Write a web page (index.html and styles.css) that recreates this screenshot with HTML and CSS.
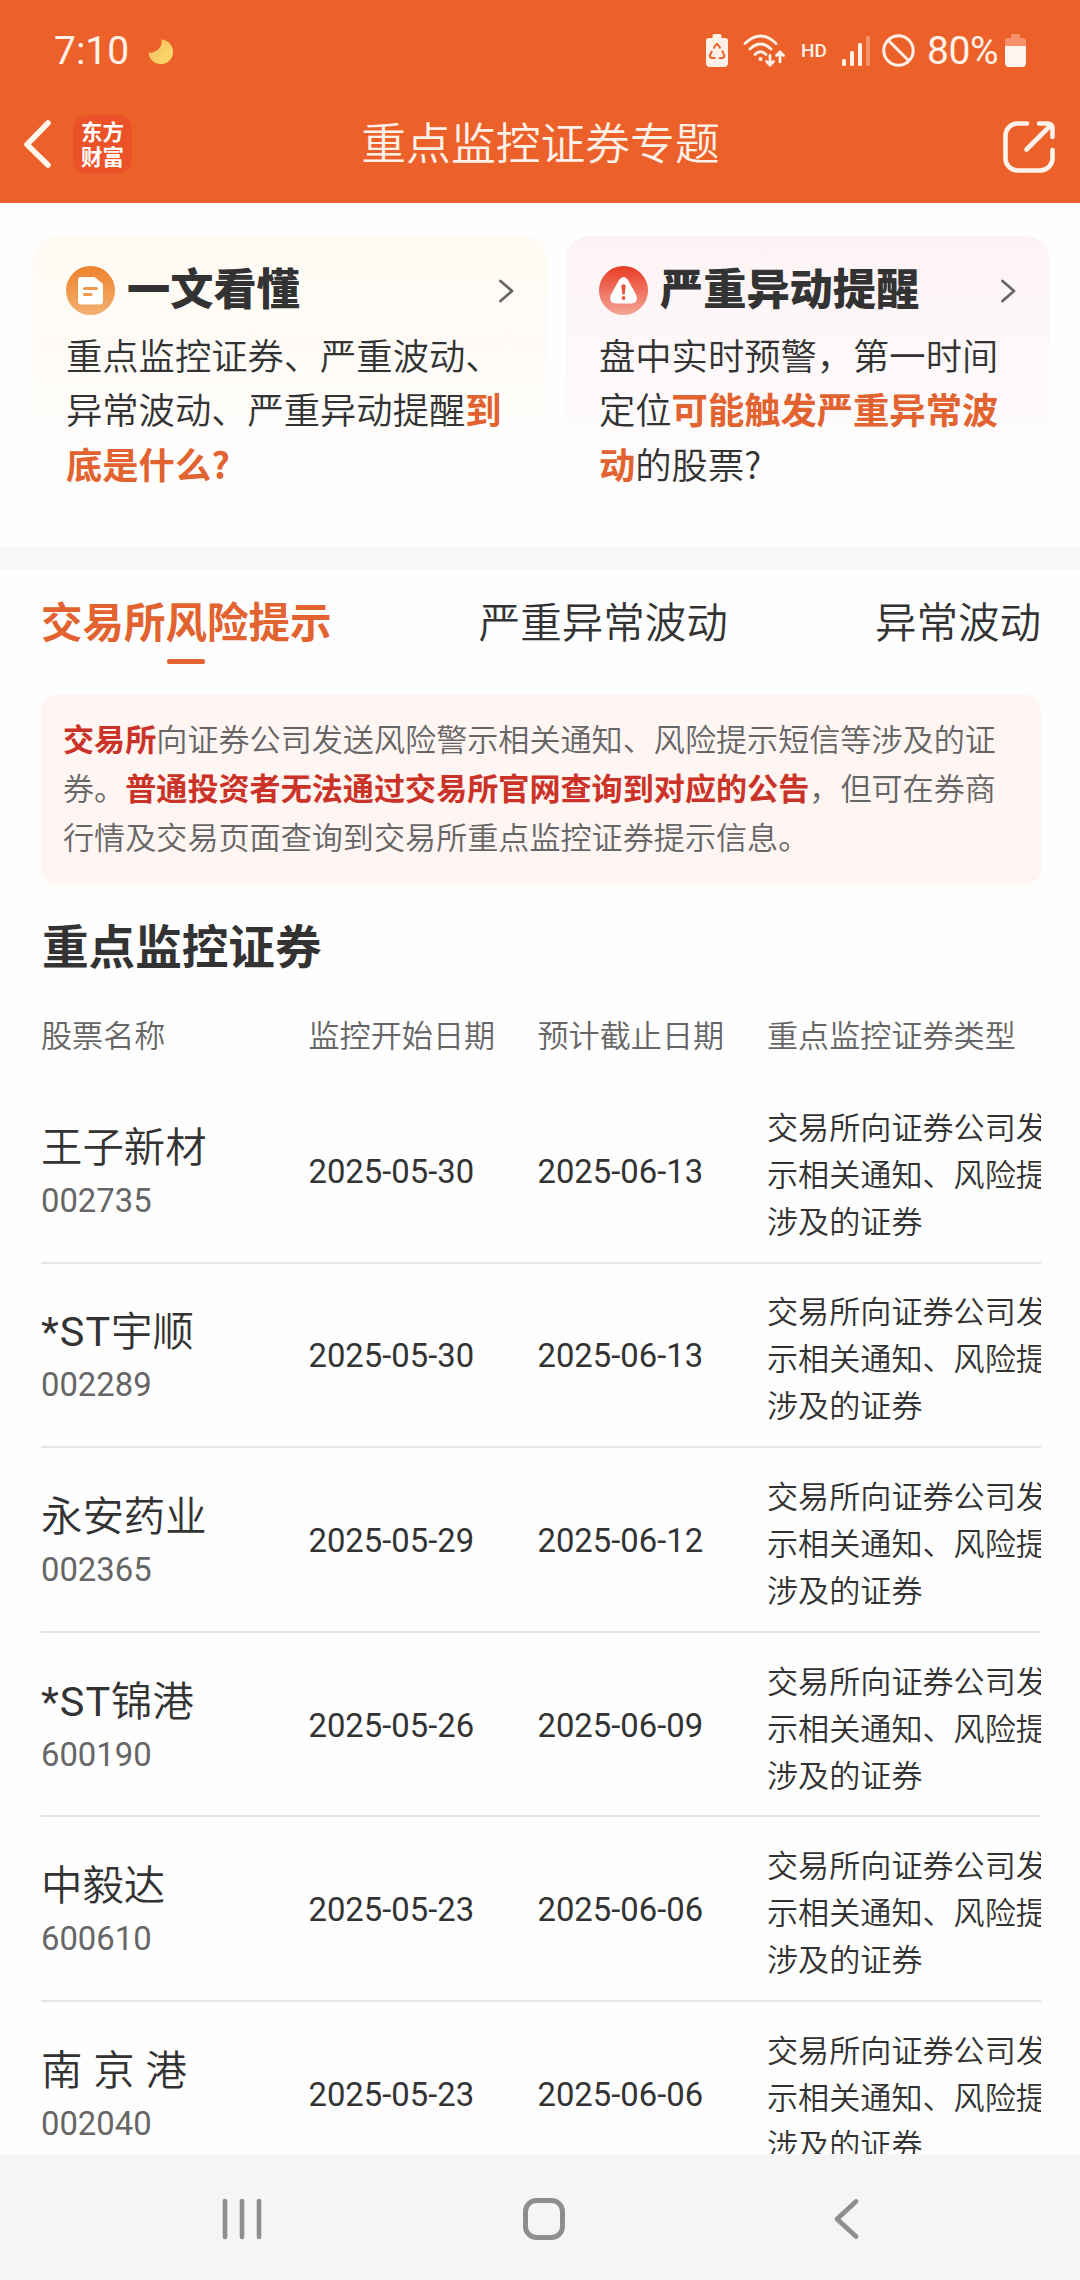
FILE: index.html
```html
<!DOCTYPE html>
<html lang="zh-CN">
<head>
    <meta charset="UTF-8">
    <meta name="viewport" content="width=device-width, initial-scale=1.0">
    <title>重点监控证券专题</title>
    <link rel="stylesheet" href="styles.css">
</head>
<body>
    <header class="header">
        <div class="status-bar">
            <span class="time">7:10</span>
            <svg class="moon" width="26" height="26" viewBox="0 0 26 26">
                <defs>
                    <linearGradient id="moonFill" x1="0" y1="0" x2="1" y2="1">
                        <stop offset="0%" stop-color="#f6b95a"></stop>
                        <stop offset="100%" stop-color="#fbe070"></stop>
                    </linearGradient>
                </defs>
                <path fill="url(#moonFill)" d="M13.500 0.500A12.300 12.300 0 1 1 0.500 13.500Q5 14.500 9.500 11Q14.500 7 13.500 0.500Z"/>
            </svg>
            <div class="status-icons">
                <svg class="ic-saver" width="22" height="33" viewBox="0 0 22 33">
                    <path fill="#fff1e8" d="M6.5 1.5a1.5 1.5 0 0 1 1.5-1.5h6a1.5 1.5 0 0 1 1.5 1.5V4H19a3 3 0 0 1 3 3v22a4 4 0 0 1-4 4H4a4 4 0 0 1-4-4V7a3 3 0 0 1 3-3h3.500z"/>
                    <g fill="none" stroke="#ec612a" stroke-width="2">
                        <path d="M7.500 14.500L10 10.800q1-1.400 2 0L14.500 14.500"/>
                        <path d="M16 16.500L18.200 21q.5 2.500-2 3H13"/>
                        <path d="M9.500 24H6q-2.700-.5-2-3L6 17"/>
                    </g>
                </svg>
                <svg class="ic-wifi" width="42" height="33" viewBox="0 0 42 33">
                    <g fill="none" stroke="#fff1e8" stroke-width="2.800" stroke-linecap="round">
                        <path d="M2 9.500Q17.500-5.500 33 9.500"/>
                        <path d="M7 15Q17.500 5 28 15"/>
                        <path d="M12 20.500Q17.500 15 23 20.500"/>
                        <path d="M27 21.500v9M23.500 27.500l3.500 3.500L30.500 27.500"/>
                        <path d="M37 28V18.500M33.500 21.500L37 18l3.500 3.500"/>
                    </g>
                    <circle cx="17.500" cy="25" r="2" fill="#fff1e8"/>
                </svg>
                <span class="hd">HD</span>
                <svg class="ic-signal" width="28" height="30" viewBox="0 0 28 30">
                    <g fill="#fff1e8">
                        <rect x="0" y="23" width="4" height="7" rx="1.500"/>
                        <rect x="8" y="15" width="4" height="15" rx="1.500"/>
                        <rect x="16" y="7" width="4" height="23" rx="1.500"/>
                        <rect x="24" y="0" width="4" height="30" rx="1.500" opacity=".35"/>
                    </g>
                </svg>
                <svg class="ic-block" width="33" height="33" viewBox="0 0 33 33">
                    <g fill="none" stroke="#fff1e8" stroke-width="3">
                        <circle cx="16.500" cy="16.500" r="14.700"/>
                        <path d="M6 6L27 27"/>
                    </g>
                </svg>
                <span class="percent">80%</span>
                <svg class="ic-battery" width="21" height="33" viewBox="0 0 21 33">
                    <path fill="#f6936c" d="M6 1.500A1.500 1.500 0 0 1 7.500 0h6A1.500 1.500 0 0 1 15 1.500V4h3a3 3 0 0 1 3 3v5H0V7a3 3 0 0 1 3-3h3z"/>
                    <path fill="#fff4ee" d="M0 12h21v17a4 4 0 0 1-4 4H4a4 4 0 0 1-4-4z"/>
                </svg>
            </div>
        </div>
        <div class="title-bar">
            <div class="title-left">
                <svg width="30" height="50" viewBox="0 0 30 50">
                    <path d="M27 4L6 25.500L27 46" fill="none" stroke="#fff6ee" stroke-width="5.500" stroke-linecap="round" stroke-linejoin="round"/>
                </svg>
                <div class="logo">东方<br>财富</div>
            </div>
            <h1>重点监控证券专题</h1>
            <svg class="share" width="52" height="52" viewBox="0 0 52 52">
                <g fill="none" stroke="#fff3ea" stroke-width="4.600" stroke-linecap="round" stroke-linejoin="round">
                    <path d="M24 2.500H14.500A12 12 0 0 0 2.500 14.500V37.500A12 12 0 0 0 14.500 49.500H37.500A12 12 0 0 0 49.500 37.500V29"/>
                    <path d="M36 2.500H44Q49.500 2.500 49.500 8V16"/>
                    <path d="M23.500 28.500L48 4"/>
                </g>
            </svg>
        </div>
    </header>

    <main class="content">
        <section class="cards">
            <div class="card card-guide">
                <div class="card-head">
                    <svg width="49" height="49" viewBox="0 0 49 49">
                        <defs>
                            <linearGradient id="orange" x1="0" y1="0" x2="0" y2="1">
                                <stop offset="0%" stop-color="#ee822c"></stop>
                                <stop offset="100%" stop-color="#f4b070"></stop>
                            </linearGradient>
                        </defs>
                        <circle cx="24.500" cy="24.500" r="24.500" fill="url(#orange)"/>
                        <path d="M15 11H28.500L37 18V35a3.500 3.500 0 0 1-3.500 3.500H15.500A3.500 3.500 0 0 1 12 35V14a3 3 0 0 1 3-3z" fill="#fff"/>
                        <path d="M18.500 22.500h12M18.500 28.500h6.500" stroke="#f0994c" stroke-width="3.200" stroke-linecap="round"/>
                    </svg>
                    <h2>一文看懂</h2>
                    <svg class="arrow" width="16" height="24" viewBox="0 0 16 24">
                        <path d="M1.500 2L13 12L1.500 22" fill="none" stroke="#666" stroke-width="2.800" stroke-linecap="round" stroke-linejoin="round"/>
                    </svg>
                </div>
                <p>重点监控证券、严重波动、<br>异常波动、严重异动提醒<b>到<br>底是什么?</b></p>
            </div>
            <div class="card card-alert">
                <div class="card-head">
                    <svg width="49" height="49" viewBox="0 0 49 49">
                        <defs>
                            <linearGradient id="red" x1="0" y1="0" x2="0" y2="1">
                                <stop offset="0%" stop-color="#e93b24"></stop>
                                <stop offset="100%" stop-color="#f5a598"></stop>
                            </linearGradient>
                        </defs>
                        <circle cx="24.500" cy="24.500" r="24.500" fill="url(#red)"/>
                        <path d="M20 14Q24.500 8 29 14L37 28.500Q40 37.500 31.500 37.500H17.500Q9 37.500 12 28.500Z" fill="#fff"/>
                        <path d="M22.300 19.500q2.200-2.500 4.400 0L25.700 28.500h-2.400z" fill="#e9573f"/>
                        <circle cx="24.500" cy="32" r="1.900" fill="#e9573f"/>
                    </svg>
                    <h2>严重异动提醒</h2>
                    <svg class="arrow" width="16" height="24" viewBox="0 0 16 24">
                        <path d="M1.500 2L13 12L1.500 22" fill="none" stroke="#666" stroke-width="2.800" stroke-linecap="round" stroke-linejoin="round"/>
                    </svg>
                </div>
                <p>盘中实时预警，第一时间<br>定位<b>可能触发严重异常波<br>动</b>的股票?</p>
            </div>
        </section>

        <nav class="tabs">
            <a class="tab active">交易所风险提示</a>
            <a class="tab">严重异常波动</a>
            <a class="tab">异常波动</a>
        </nav>

        <div class="notice">
            <b>交易所</b>向证券公司发送风险警示相关通知、风险提示短信等涉及的证<br>券。<b>普通投资者无法通过交易所官网查询到对应的公告</b>，但可在券商<br>行情及交易页面查询到交易所重点监控证券提示信息。
        </div>

        <h3>重点监控证券</h3>

        <div class="table">
            <div class="row row-head">
                <div>股票名称</div>
                <div>监控开始日期</div>
                <div>预计截止日期</div>
                <div>重点监控证券类型</div>
            </div>
            <div class="row">
                <div class="stock"><span class="name">王子新材</span><span class="code">002735</span></div>
                <div class="date">2025-05-30</div>
                <div class="date">2025-06-13</div>
                <div class="type">交易所向证券公司发送风险警<br>示相关通知、风险提示短信等<br>涉及的证券</div>
            </div>
            <div class="row">
                <div class="stock"><span class="name"><i>*ST</i>宇顺</span><span class="code">002289</span></div>
                <div class="date">2025-05-30</div>
                <div class="date">2025-06-13</div>
                <div class="type">交易所向证券公司发送风险警<br>示相关通知、风险提示短信等<br>涉及的证券</div>
            </div>
            <div class="row">
                <div class="stock"><span class="name">永安药业</span><span class="code">002365</span></div>
                <div class="date">2025-05-29</div>
                <div class="date">2025-06-12</div>
                <div class="type">交易所向证券公司发送风险警<br>示相关通知、风险提示短信等<br>涉及的证券</div>
            </div>
            <div class="row">
                <div class="stock"><span class="name"><i>*ST</i>锦港</span><span class="code">600190</span></div>
                <div class="date">2025-05-26</div>
                <div class="date">2025-06-09</div>
                <div class="type">交易所向证券公司发送风险警<br>示相关通知、风险提示短信等<br>涉及的证券</div>
            </div>
            <div class="row">
                <div class="stock"><span class="name">中毅达</span><span class="code">600610</span></div>
                <div class="date">2025-05-23</div>
                <div class="date">2025-06-06</div>
                <div class="type">交易所向证券公司发送风险警<br>示相关通知、风险提示短信等<br>涉及的证券</div>
            </div>
            <div class="row">
                <div class="stock"><span class="name">南 京 港</span><span class="code">002040</span></div>
                <div class="date">2025-05-23</div>
                <div class="date">2025-06-06</div>
                <div class="type">交易所向证券公司发送风险警<br>示相关通知、风险提示短信等<br>涉及的证券</div>
            </div>
        </div>
    </main>

    <footer class="sys-nav">
        <svg width="44" height="44" viewBox="0 0 44 44">
            <path d="M5 4V40M22 4V40M39 4V40" stroke="#8e8e8e" stroke-width="4.600" stroke-linecap="round"/>
        </svg>
        <svg width="44" height="44" viewBox="0 0 44 44">
            <rect x="2.500" y="3.500" width="37" height="37" rx="11" fill="none" stroke="#8e8e8e" stroke-width="5"/>
        </svg>
        <svg width="44" height="44" viewBox="0 0 44 44">
            <path d="M31 4.500L12 22L31 39.500" fill="none" stroke="#8e8e8e" stroke-width="4.800" stroke-linecap="round" stroke-linejoin="round"/>
        </svg>
    </footer>
</body>
</html>
```

FILE: styles.css
```css
:root {
    --orange: #ec612a;
    --accent: #e2632f;
    --red: #cb3328;
    --text: #333;
    --muted: #666;
}
* { box-sizing: border-box; margin: 0; padding: 0; }
body {
    width: 1080px;
    height: 2280px;
    overflow: hidden;
    display: flex;
    flex-direction: column;
    background: #fefefe;
    color: var(--text);
    font-family: Roboto, "Noto Sans CJK SC", sans-serif;
    font-weight: 350;
}
svg { display: block; flex: none; }

/* header */
.header {
    flex: none;
    height: 203px;
    background: var(--orange);
    color: #fff1e8;
}
.status-bar {
    height: 100px;
    padding: 1px 54px 0;
    display: flex;
    align-items: center;
    font-weight: 400;
}
.time { font-size: 39px; line-height: 46px; }
.moon { margin-left: 19px; margin-top: 2px; }
.status-icons {
    display: flex;
    align-items: center;
    margin-left: auto;
}
.ic-wifi { margin-left: 15px; }
.hd { margin-left: 16px; width: 27px; font-size: 19px; font-weight: 500; }
.ic-signal { margin-left: 14px; }
.ic-block { margin-left: 12px; }
.percent { margin-left: 12px; width: 73px; font-size: 39px; letter-spacing: -0.4px; }
.ic-battery { margin-left: 5px; }
.title-bar {
    height: 88px;
    padding: 0 25px 0 21px;
    display: grid;
    grid-template-columns: 1fr auto 1fr;
    align-items: center;
}
.title-left { display: flex; align-items: center; gap: 22px; }
.logo {
    width: 59px;
    height: 59px;
    padding-top: 5px;
    border-radius: 14px;
    background: #eb5228;
    color: #fff;
    font-size: 21.5px;
    font-weight: 700;
    line-height: 25px;
    text-align: center;
}
.title-bar h1 {
    padding: 1px 0 0 5px;
    font-size: 44.8px;
    font-weight: 350;
    line-height: 60px;
}
.share { justify-self: end; margin-top: 6px; }

/* content */
.content { flex: 1; min-height: 0; overflow: hidden; }
.cards {
    height: 366px;
    padding: 33px 31px 0 33px;
    border-bottom: 22px solid #f7f7f9;
    display: grid;
    grid-template-columns: 514px 483px;
    gap: 19px;
}
.card {
    height: 275px;
    padding: 30px 32px 0 33px;
    border-radius: 23px;
}
.card-guide { background: linear-gradient(180deg, #fffaf3, #fefefe); }
.card-alert { background: linear-gradient(180deg, #fdf3f5, #fefefe); }
.card-head { display: flex; align-items: center; height: 49px; }
.card-head h2 {
    margin-left: 12px;
    font-size: 43.2px;
    font-weight: 900;
    line-height: 49px;
    white-space: nowrap;
}
.arrow { margin-left: auto; }
.card p {
    margin-top: 12px;
    font-family: "Noto Sans CJK SC", sans-serif;
    font-size: 36.3px;
    line-height: 54.4px;
    white-space: nowrap;
}
.card b { color: var(--accent); }

.tabs {
    display: flex;
    justify-content: space-between;
    height: 125px;
    padding: 27px 39px 0 41px;
}
.tab { font-size: 41.5px; line-height: 56px; }
.tab.active { color: var(--accent); font-weight: 700; }
.tab.active::after {
    content: "";
    display: block;
    width: 38px;
    height: 5px;
    margin: 7px auto 0;
    border-radius: 2px;
    background: var(--accent);
}

.notice {
    height: 191px;
    margin: 0 39px 0 41px;
    padding: 22px 22px;
    border-radius: 17px;
    background: #fff5f2;
    color: var(--muted);
    font-size: 31.1px;
    line-height: 49px;
    white-space: nowrap;
}
.notice b { color: var(--red); }

h3 {
    margin: 30px 0 0 42px;
    font-size: 46.6px;
    line-height: 66px;
}

/* stock table */
.table { margin: 0 39px 0 41px; overflow: hidden; }
.row {
    display: grid;
    grid-template-columns: 267.5px 229px 229.5px 1fr;
    align-items: center;
    height: 184.6px;
    border-bottom: 2px solid #e6e6e6;
    white-space: nowrap;
}
.row-head {
    height: 98px;
    padding-top: 7px;
    border-bottom: none;
    color: var(--muted);
    font-size: 31.1px;
}
.stock { display: flex; flex-direction: column; padding-top: 5px; }
.name { font-size: 41.4px; line-height: 57px; word-spacing: 0.8px; }
.name i { font-style: normal; font-weight: 400; letter-spacing: 1px; }
.code { color: var(--muted); font-size: 32.8px; font-weight: 400; line-height: 49px; }
.date { padding-top: 3px; font-size: 32.8px; font-weight: 400; }
.type { padding-top: 10px; font-size: 31.1px; line-height: 47px; }

/* android navigation */
.sys-nav {
    flex: none;
    height: 126px;
    padding: 4px 211px 0 220px;
    display: flex;
    align-items: center;
    justify-content: space-between;
    background: #f5f5f5;
}
```
